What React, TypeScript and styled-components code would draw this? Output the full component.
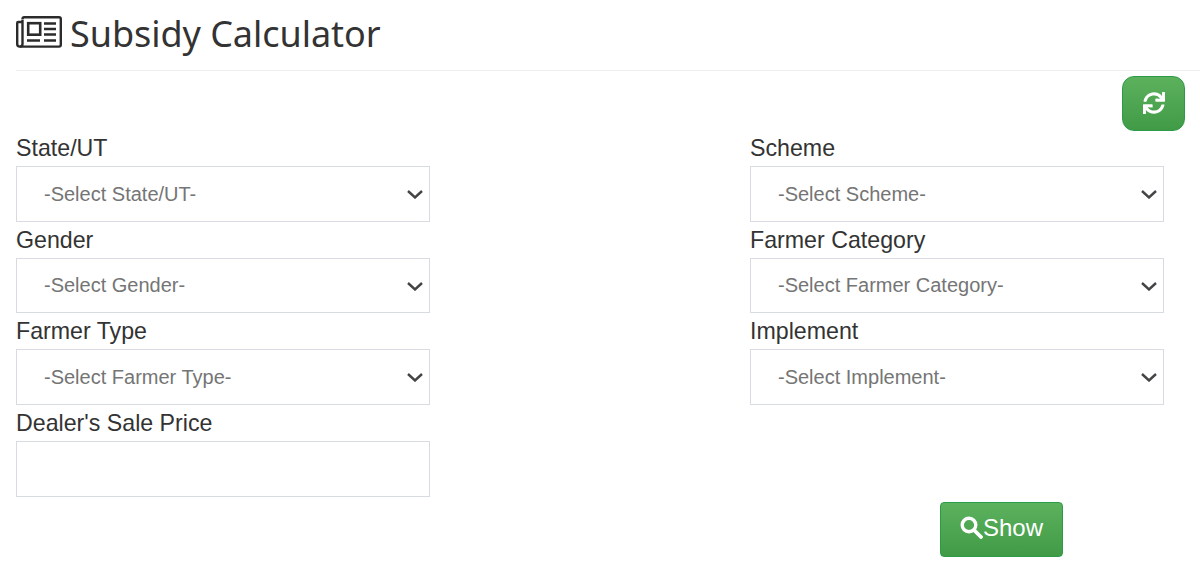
import React from 'react';
import styled, { createGlobalStyle } from 'styled-components';
import { FaSync } from 'react-icons/fa';

const GlobalStyle = createGlobalStyle`
  html, body { margin: 0; padding: 0; background: #fff; }
  body { font-family: "Liberation Sans", Arial, sans-serif; color: #333; }
  * { box-sizing: border-box; }
`;

const Page = styled.div`
  width: 1200px;
  height: 585px;
  padding-left: 16px;
  overflow: hidden;
`;

const Header = styled.header`
  height: 71px;
  display: flex;
  align-items: flex-start;
  gap: 8px;
  padding-top: 12px;
  border-bottom: 1px solid #eee;
`;

const Title = styled.h1`
  margin: 0;
  font-family: "Noto Sans", "Open Sans", sans-serif;
  font-size: 36px;
  line-height: 44px;
  font-weight: 400;
  letter-spacing: -0.05px;
  color: #333;
`;

const IconSvg = styled.svg`
  flex: none;
  margin-top: 4px;
  color: #2b2b2b;
`;

const NewspaperIcon = () => (
  <IconSvg width="46" height="32" viewBox="0 0 46 32" fill="none" stroke="currentColor" strokeWidth="2.4">
    <path d="M6.5 3.5 V28 Q6.5 30.6 3.8 30.6 Q1.2 30.6 1.2 28 V7 Q1.2 6 2.2 6 H6.5" />
    <path d="M6.5 3 Q6.5 1.2 8.3 1.2 H43 Q44.8 1.2 44.8 3 V28.8 Q44.8 30.6 43 30.6 H3.8" />
    <rect x="12.2" y="7.2" width="12" height="11.5" strokeWidth="2.6" />
    <path d="M28 7.5 H40 M28 13 H40 M28 18.5 H40 M11 24.5 H24 M28 24.5 H40" />
  </IconSvg>
);

const ActionRow = styled.div`
  height: 60px;
  display: flex;
  justify-content: flex-end;
  align-items: flex-end;
  padding-right: 15px;
`;

const greenButton = `
  border: 1px solid #2c9a48;
  background: linear-gradient(to bottom, #5cb15d 0%, #419b46 100%);
  color: #fff;
  display: flex;
  align-items: center;
  justify-content: center;
`;

const RefreshButton = styled.button`
  ${greenButton}
  width: 63px;
  height: 55px;
  padding: 0 0 2px;
  border-radius: 12px;
  font-size: 22px;
`;

const FormGrid = styled.div`
  display: grid;
  grid-template-columns: repeat(2, 414px);
  column-gap: 320px;
  grid-auto-rows: 91.67px;
  margin-top: -1px;
`;

const Field = styled.div`
  display: flex;
  flex-direction: column;
  justify-content: flex-end;
`;

const Label = styled.label`
  font-size: 23.2px;
  line-height: 36px;
  height: 36px;
  color: #333;
`;

const SelectBox = styled.div`
  position: relative;
  width: 414px;
  height: 56px;
`;

const Select = styled.select`
  appearance: none;
  width: 100%;
  height: 100%;
  padding: 0 24px 0 27px;
  font-family: "Liberation Sans", Arial, sans-serif;
  font-size: 20px;
  color: #757575;
  background: #fff;
  border: 1px solid #d8dbe2;
  border-radius: 0;
  outline: none;
`;

const Chevron = styled.svg`
  position: absolute;
  right: 7px;
  top: 24px;
  pointer-events: none;
`;

const Input = styled.input`
  width: 414px;
  height: 56px;
  padding: 0 24px;
  font-size: 20px;
  border: 1px solid #d8dbe2;
  outline: none;
`;

const SubmitRow = styled.div`
  display: flex;
  padding-left: 924px;
  margin-top: 5px;
`;

const ShowButton = styled.button`
  ${greenButton}
  width: 123px;
  height: 55px;
  padding: 0 0 3px;
  border-radius: 4px;
  font-family: "Liberation Sans", Arial, sans-serif;
  font-size: 24px;
`;

const SearchIcon = () => (
  <svg width="23" height="23" viewBox="0 0 23 23" fill="none" stroke="currentColor">
    <circle cx="9" cy="9" r="6.8" strokeWidth="3.4" />
    <path d="M14.5 14.5 L21 21" strokeWidth="3.8" strokeLinecap="round" />
  </svg>
);

const fields = [
  { label: 'State/UT', placeholder: '-Select State/UT-' },
  { label: 'Scheme', placeholder: '-Select Scheme-' },
  { label: 'Gender', placeholder: '-Select Gender-' },
  { label: 'Farmer Category', placeholder: '-Select Farmer Category-' },
  { label: 'Farmer Type', placeholder: '-Select Farmer Type-' },
  { label: 'Implement', placeholder: '-Select Implement-' },
];

export default function App() {
  return (
    <Page>
      <GlobalStyle />
      <Header>
        <NewspaperIcon />
        <Title>Subsidy Calculator</Title>
      </Header>
      <ActionRow>
        <RefreshButton aria-label="Reset"><FaSync /></RefreshButton>
      </ActionRow>
      <FormGrid>
        {fields.map(f => (
          <Field key={f.label}>
            <Label>{f.label}</Label>
            <SelectBox>
              <Select defaultValue="">
                <option value="">{f.placeholder}</option>
              </Select>
              <Chevron width="16" height="9" viewBox="0 0 16 9" fill="none" stroke="#444" strokeWidth="2.4">
                <path d="M1 1 L8 7.5 L15 1" />
              </Chevron>
            </SelectBox>
          </Field>
        ))}
        <Field>
          <Label>Dealer's Sale Price</Label>
          <Input type="text" />
        </Field>
      </FormGrid>
      <SubmitRow>
        <ShowButton><SearchIcon />Show</ShowButton>
      </SubmitRow>
    </Page>
  );
}
